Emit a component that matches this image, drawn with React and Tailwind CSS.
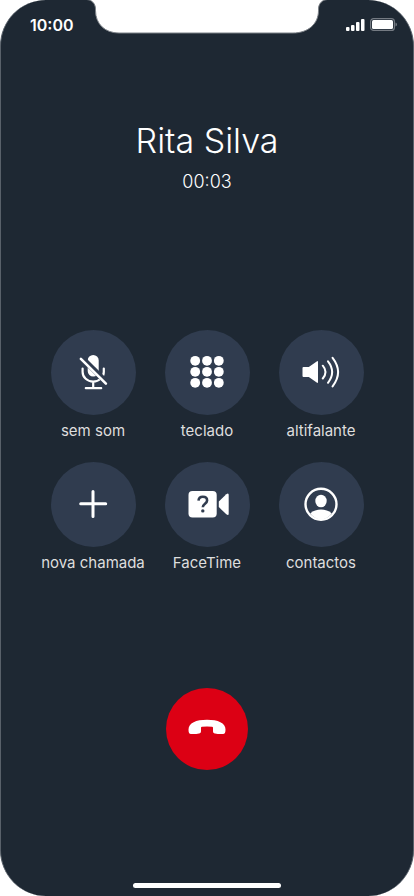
function MutedIcon() {
  return (
    <svg className="size-10" viewBox="0 0 40 40" fill="none" stroke="white" strokeLinecap="round" aria-hidden="true">
      <path d="M14.700 8.500a5.500 5.500 0 0 1 11 0v10.500a5.500 5.500 0 0 1-11 0z" fill="white" stroke="none" />
      <path d="M9.600 16.500v3.500a10.600 9.600 0 0 0 21.200 0v-3.500M20.200 30v4.800M12.800 36.200h15.400" strokeWidth="2.200" />
      <path d="M9 6 34 30.700" stroke="#303c4f" strokeWidth="5.500" strokeLinecap="butt" />
      <path d="M7.900 6.900 32.900 31.600" strokeWidth="2.600" />
    </svg>
  );
}

function KeypadIcon() {
  return (
    <svg className="size-10" viewBox="0 0 40 40" fill="white" aria-hidden="true">
      {[8.2, 20, 31.8].map((x) =>
        [8.8, 19.8, 30.8].map((y) => <circle key={`${x}-${y}`} cx={x} cy={y} r="4.9" />)
      )}
    </svg>
  );
}

function SpeakerIcon() {
  return (
    <svg className="size-10" viewBox="0 0 40 40" fill="none" stroke="white" strokeWidth="2" strokeLinecap="round" aria-hidden="true">
      <path d="M1.500 16q0-1 1-1h5.300L15.700 9.400q1.300-.8 1.300.6v20q0 1.400-1.300.6L7.800 25H2.500q-1 0-1-1z" fill="white" stroke="none" />
      <path d="M21.800 13.700q5.400 6.300 0 12.800M27 9.400q8.300 10.700 0 21.400M31.600 5.800q11 14.300 0 28.600" />
    </svg>
  );
}

function PlusIcon() {
  return (
    <svg className="size-10" viewBox="0 0 40 40" fill="none" stroke="white" strokeWidth="3" strokeLinecap="round" aria-hidden="true">
      <path d="M20 7.500v25M7.700 19.700h25" />
    </svg>
  );
}

function FaceTimeIcon() {
  return (
    <svg className="h-10 w-11" viewBox="0 0 44 40" aria-hidden="true">
      <rect x="3.500" y="7" width="28.200" height="26.500" rx="4" fill="white" />
      <path d="M33.800 17.400 41.300 10.200q2.400-1.900 2.400.8v18.500q0 2.700-2.400.8l-7.500-7.200z" fill="white" />
      <path d="M13.500 16.700c.2-2.700 1.900-4 4.300-4 2.600 0 4.300 1.500 4.300 3.700 0 3.300-4.300 3.300-4.300 6.900" fill="none" stroke="#303c4f" strokeWidth="2.600" />
      <circle cx="17.800" cy="26.900" r="1.700" fill="#303c4f" />
    </svg>
  );
}

function ContactIcon() {
  return (
    <svg className="size-10" viewBox="0 0 40 40" fill="white" aria-hidden="true">
      <circle cx="20" cy="20.300" r="15.500" fill="none" stroke="white" strokeWidth="2.400" />
      <ellipse cx="20" cy="17" rx="5.700" ry="6.300" />
      <path d="M9.200 29.500c3-3 6.800-4 10.800-4s7.800 1 10.800 4A15 15 0 0 1 20 35.500 15 15 0 0 1 9.200 29.500z" />
    </svg>
  );
}

const actions = [
  { label: "sem som", Icon: MutedIcon },
  { label: "teclado", Icon: KeypadIcon },
  { label: "altifalante", Icon: SpeakerIcon },
  { label: "nova chamada", Icon: PlusIcon },
  { label: "FaceTime", Icon: FaceTimeIcon },
  { label: "contactos", Icon: ContactIcon },
];

function StatusBar() {
  return (
    <header className="grid grid-cols-[1fr_auto_1fr] items-start">
      <span className="pt-3.5 pl-[29px] text-base leading-[22px] font-semibold">10:00</span>
      <svg className="-mt-px h-[35px] w-60" viewBox="0 0 240 35" aria-hidden="true">
        <path d="M-1 .5C4.500.5 8.500 4.500 8.500 10v1.500C8.500 25 18 34 32 34H206C221 34 231.500 25 231.500 11.500V10C231.500 4.500 235.500.5 241 .5V-2H-1z" fill="white" stroke="#7b8086" />
        <path d="M0 0H240" stroke="white" />
      </svg>
      <div className="flex items-center justify-end gap-[5px] pt-[18px] pr-4">
        <svg className="h-3 w-[19px]" viewBox="0 0 19 12" fill="white" aria-label="Rede">
          <rect x="0" y="8" width="3.500" height="4" rx="1" />
          <rect x="5" y="6" width="3.500" height="6" rx="1" />
          <rect x="10" y="3" width="3.500" height="9" rx="1" />
          <rect x="15" y="0" width="3.500" height="12" rx="1" />
        </svg>
        <svg className="h-[13px] w-[27px]" viewBox="0 0 27 13" aria-label="Bateria">
          <rect x=".6" y=".6" width="23.800" height="11.800" rx="3" fill="none" stroke="#747a82" strokeWidth="1.200" />
          <rect x="2" y="2" width="21" height="9" rx="1.500" fill="white" />
          <path d="M25.500 4.500q1.500.5 1.500 2t-1.500 2z" fill="#747a82" />
        </svg>
      </div>
    </header>
  );
}

export default function App() {
  return (
    <div className="min-h-screen bg-white font-['Inter',sans-serif]">
      <main className="flex min-h-screen flex-col rounded-[46px] border-x border-[#59616a] bg-[#1e2833] text-white">
        <StatusBar />

        <section className="mt-[82px] flex flex-col items-center">
          <h1 className="text-[34px] leading-[46px] font-light">Rita Silva</h1>
          <p className="mt-1.5 text-lg leading-6 font-light">00:03</p>
        </section>

        <section className="mx-auto mt-[136px] grid grid-cols-[repeat(3,114px)] gap-y-5">
          {actions.map(({ label, Icon }) => (
            <button key={label} type="button" className="flex flex-col items-center gap-[5px]">
              <span className="flex size-[85px] items-center justify-center rounded-full bg-[#303c4f] pb-px">
                <Icon />
              </span>
              <span className="text-[15px] leading-[22px] font-normal whitespace-nowrap text-[#dedede]">{label}</span>
            </button>
          ))}
        </section>

        <button
          type="button"
          aria-label="Desligar"
          className="mx-auto mt-[114px] flex size-[82px] items-center justify-center rounded-full bg-[#dc0014] pb-1"
        >
          <svg className="h-4 w-10" viewBox="0 0 40 16" fill="white" aria-hidden="true">
            <path d="M20 .8C31 .8 38.500 4 38.500 10.500c0 3.300-.7 4.300-2.500 4.500q-4 .4-8-.5c-1.500-.3-2-1-2-2.500V8.700q0-.8-1-1-5-.5-10 0-1 .2-1 1V12c0 1.500-.5 2.200-2 2.500q-4 .9-8 .5c-1.800-.2-2.500-1.200-2.500-4.500C1.500 4 9 .8 20 .8z" />
          </svg>
        </button>

        <div className="mx-auto mt-auto mb-2 h-[5px] w-[148px] rounded-full bg-white" />
      </main>
    </div>
  );
}
